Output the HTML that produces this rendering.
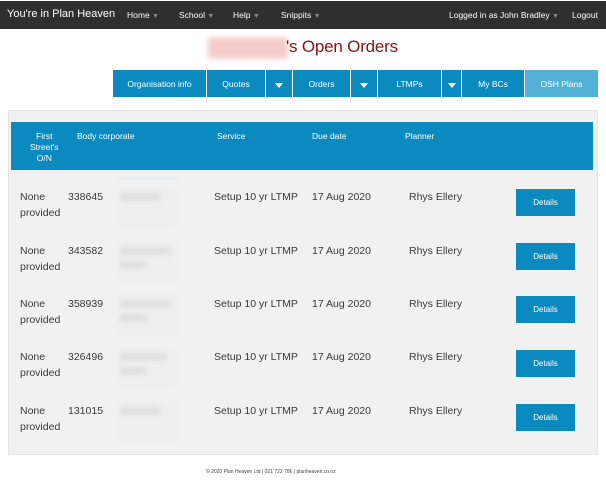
<!DOCTYPE html><html><head><meta charset="utf-8"><style>
*{margin:0;padding:0;box-sizing:border-box}
body{width:606px;height:480px;background:#fff;font-family:"Liberation Sans",sans-serif;position:relative;overflow:hidden;color:#333}
.a{position:absolute;white-space:nowrap}
.nav{position:absolute;left:0;top:1px;width:606px;height:28px;background:#2f2f2f;color:#fff}
.nav .a{font-size:8.5px;top:9px}
.car{color:#888;font-size:7px}
.tab{position:absolute;top:70px;height:27px;background:#0b8abf;color:#fff;font-size:8.5px;display:flex;align-items:center;justify-content:center;border-right:1px solid #fff}
.tri{width:0;height:0;border-left:4px solid transparent;border-right:4px solid transparent;border-top:5px solid #fff;margin-top:3px}
.panel{position:absolute;left:8px;top:110px;width:590px;height:345px;background:#f1f1f1;border:1px solid #e4e4e4}
.hd{position:absolute;left:11px;top:122px;width:582px;height:48px;background:#0b8abf;color:#fff;font-size:8.5px}
.r{font-size:10.5px;color:#3a3a3a;line-height:16px}
.btn{position:absolute;left:516px;width:59px;height:27px;background:#0b8abf;color:#fff;font-size:8px;display:flex;align-items:center;justify-content:center}
.blur{position:absolute;left:118px;width:58px;height:40px;background:#eeeeee;filter:blur(1px)}
.blur i{position:absolute;left:2px;height:6px;background:#dcdcdc;filter:blur(2px)}
</style></head><body>
<div class="nav">
<div class="a" style="left:7px;top:7px;font-size:11px">You're in Plan Heaven</div>
<div class="a" style="left:127px">Home <span class="car">▼</span></div>
<div class="a" style="left:179px">School <span class="car">▼</span></div>
<div class="a" style="left:233px">Help <span class="car">▼</span></div>
<div class="a" style="left:281px">Snippits <span class="car">▼</span></div>
<div class="a" style="left:449px">Logged in as John Bradley <span class="car">▼</span></div>
<div class="a" style="left:572px">Logout</div>
</div>
<div class="a" style="left:208px;top:37px;width:80px;height:22px;background:#f5cccc;filter:blur(3px)"></div>
<div class="a" style="left:286px;top:37px;font-size:17px;color:#8a1414;letter-spacing:-0.2px">'s Open Orders</div>
<div class="tab" style="left:113px;width:94px">Organisation info</div>
<div class="tab" style="left:207px;width:59px">Quotes</div>
<div class="tab" style="left:266px;width:27px"><div class="tri"></div></div>
<div class="tab" style="left:293px;width:58px">Orders</div>
<div class="tab" style="left:351px;width:27px"><div class="tri"></div></div>
<div class="tab" style="left:378px;width:64px">LTMPs</div>
<div class="tab" style="left:442px;width:20px"><div class="tri"></div></div>
<div class="tab" style="left:462px;width:63px">My BCs</div>
<div class="tab" style="left:525px;width:73px;background:#52b2d6;border-right:0">OSH Plans</div>
<div class="panel"></div>
<div class="hd">
<div class="a" style="left:19px;top:9px;text-align:center;line-height:11px">First<br>Street's<br>O/N</div>
<div class="a" style="left:66px;top:9px">Body corporate</div>
<div class="a" style="left:206px;top:9px">Service</div>
<div class="a" style="left:301px;top:9px">Due date</div>
<div class="a" style="left:394px;top:9px">Planner</div>
</div>
<div class="a" style="left:118px;top:177px;width:62px;height:3px;background:#e8eef2"></div>
<div class="blur" style="top:188px"><i style="top:6px;width:40px"></i></div>
<div class="blur" style="top:242px"><i style="top:6px;width:50px"></i><i style="top:20px;width:26px"></i></div>
<div class="blur" style="top:295px"><i style="top:6px;width:50px"></i><i style="top:20px;width:26px"></i></div>
<div class="blur" style="top:348px"><i style="top:6px;width:46px"></i><i style="top:20px;width:26px"></i></div>
<div class="blur" style="top:402px"><i style="top:6px;width:40px"></i></div>

<div class="a r" style="left:20px;top:189px">None<br>provided</div><div class="a r" style="left:68px;top:189px">338645</div><div class="a r" style="left:214px;top:189px">Setup 10 yr LTMP</div><div class="a r" style="left:312px;top:189px">17 Aug 2020</div><div class="a r" style="left:409px;top:189px">Rhys Ellery</div><div class="btn" style="top:189px">Details</div>
<div class="a r" style="left:20px;top:243px">None<br>provided</div><div class="a r" style="left:68px;top:243px">343582</div><div class="a r" style="left:214px;top:243px">Setup 10 yr LTMP</div><div class="a r" style="left:312px;top:243px">17 Aug 2020</div><div class="a r" style="left:409px;top:243px">Rhys Ellery</div><div class="btn" style="top:243px">Details</div>
<div class="a r" style="left:20px;top:296px">None<br>provided</div><div class="a r" style="left:68px;top:296px">358939</div><div class="a r" style="left:214px;top:296px">Setup 10 yr LTMP</div><div class="a r" style="left:312px;top:296px">17 Aug 2020</div><div class="a r" style="left:409px;top:296px">Rhys Ellery</div><div class="btn" style="top:296px">Details</div>
<div class="a r" style="left:20px;top:349px">None<br>provided</div><div class="a r" style="left:68px;top:349px">326496</div><div class="a r" style="left:214px;top:349px">Setup 10 yr LTMP</div><div class="a r" style="left:312px;top:349px">17 Aug 2020</div><div class="a r" style="left:409px;top:349px">Rhys Ellery</div><div class="btn" style="top:350px">Details</div>
<div class="a r" style="left:20px;top:403px">None<br>provided</div><div class="a r" style="left:68px;top:403px">131015</div><div class="a r" style="left:214px;top:403px">Setup 10 yr LTMP</div><div class="a r" style="left:312px;top:403px">17 Aug 2020</div><div class="a r" style="left:409px;top:403px">Rhys Ellery</div><div class="btn" style="top:404px">Details</div>

<div class="a" style="left:206px;top:469px;font-size:5px;color:#444">© 2020 Plan Heaven Ltd | 021 722 786 | planheaven.co.nz</div>
</body></html>
